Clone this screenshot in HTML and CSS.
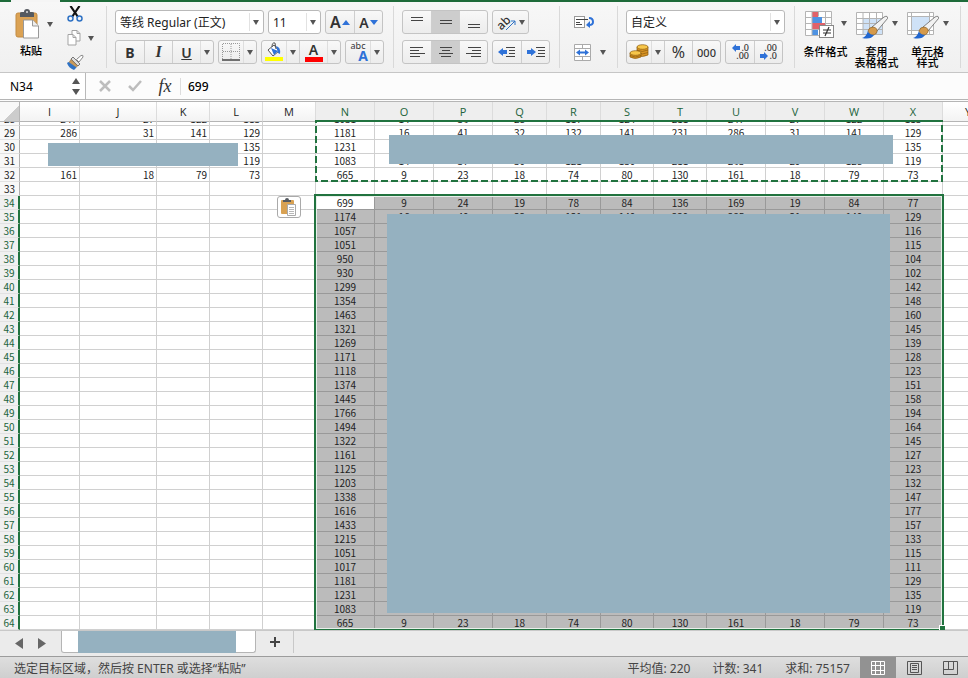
FILE: index.html
```html
<!DOCTYPE html>
<html lang="zh-CN">
<head>
    <meta charset="UTF-8">
    <meta name="viewport" content="width=device-width, initial-scale=1.0">
    <title>Sheet</title>
    <link rel="stylesheet" href="styles.css">
</head>
<body>
    <div class="ribbon-tabs"><span class="active-tab"></span></div>

    <header class="ribbon">
        <div class="group clipboard">
            <button type="button" class="big paste">
                <span class="big-icon">
                    <svg width="26" height="31" viewBox="0 0 26 31">
                        <rect x="1" y="4" width="21" height="24" rx="2" fill="#dba254" stroke="#c28b42"/>
                        <path d="M5 8V4q0-1 2-1h2q0-3 3-3t3 3h2q2 0 2 1v4z" fill="#555a60"/>
                        <circle cx="12" cy="3" r="1" fill="#ddd"/>
                        <path d="M8.500 11h9l6 6v12h-15z" fill="#fff" stroke="#999"/>
                        <path d="M17.500 11v6h6" fill="#eee" stroke="#999"/>
                    </svg>
                    <i class="caret"></i>
                </span>
                <span>粘贴</span>
            </button>
            <div class="small-icons">
                <button type="button" aria-label="剪切">
                    <svg width="16" height="16" viewBox="0 0 16 16" fill="none">
                        <path d="M3.500 0l7.500 11M12.500 0L5 11" stroke="#111" stroke-width="2.200"/>
                        <circle cx="3.500" cy="12.500" r="2.500" stroke="#2f72c4" stroke-width="1.500"/>
                        <circle cx="12.500" cy="12.500" r="2.500" stroke="#2f72c4" stroke-width="1.500"/>
                    </svg>
                </button>
                <button type="button" aria-label="复制">
                    <svg width="16" height="16" viewBox="0 0 16 16" fill="#fff" stroke="#a3a3a3">
                        <path d="M5 .5h5l3 3V11H5z"/>
                        <path d="M10 .5v3h3" fill="none"/>
                        <path d="M1 4.500h5l3 3V15H1z"/>
                        <path d="M6 4.500v3h3" fill="none"/>
                    </svg>
                    <i class="caret"></i>
                </button>
                <button type="button" aria-label="格式刷">
                    <svg width="18" height="16" viewBox="0 0 18 16">
                        <path d="M9.500 5.500L14 1.500q2.500-1 2 1.500L12 8z" fill="#fff" stroke="#888"/>
                        <path d="M6 3l7 7-2 2-7-7z" fill="#ddd" stroke="#777"/>
                        <path d="M4 5.500l6.500 6.500-1.500 1.500-7-5z" fill="#c89a5b" stroke="#8d6b3d" stroke-width=".6"/>
                        <path d="M1.500 8l8 5.500L7 16Q1.500 14 0 9z" fill="#2f72c4"/>
                    </svg>
                </button>
            </div>
        </div>

        <div class="group">
            <div class="line">
                <span class="combo font-name">
                    <select aria-label="字体"><option>等线 Regular (正文)</option></select>
                </span>
                <span class="combo font-size">
                    <select aria-label="字号"><option>11</option></select>
                </span>
                <div class="buttons">
                    <button type="button" class="letter" aria-label="增大字号">A<i class="tri up"></i></button>
                    <button type="button" class="letter small" aria-label="减小字号">A<i class="tri down"></i></button>
                </div>
            </div>
            <div class="line">
                <div class="buttons">
                    <button type="button" class="bold">B</button>
                    <button type="button" class="italic">I</button>
                    <button type="button" class="underline"><u>U</u></button>
                    <button type="button" class="drop" aria-label="下划线选项"><i class="caret"></i></button>
                </div>
                <div class="buttons">
                    <button type="button" class="narrow" aria-label="边框">
                        <svg width="18" height="18" viewBox="0 0 18 18" fill="none" stroke="#999">
                            <path d="M.5 16V.5h17V16M9 1v15M1 8.500h16" stroke-dasharray="1 1"/>
                            <path d="M0 17h18" stroke="#444" stroke-width="1.500"/>
                        </svg>
                    </button>
                    <button type="button" class="drop" aria-label="边框选项"><i class="caret"></i></button>
                </div>
                <div class="buttons">
                    <button type="button" class="fill" aria-label="填充颜色">
                        <svg width="18" height="20" viewBox="0 0 18 20">
                            <path d="M3 8l6-5 5 6-6 5z" fill="#fff" stroke="#555"/>
                            <path d="M6 6l7 3-4 4z" fill="#2f72d8"/>
                            <path d="M7 5q0-5 3-4l1 6" fill="none" stroke="#555"/>
                            <path d="M11 4q5 1 4 8l-2-1z" fill="#2f72d8"/>
                            <path d="M0 15h18v4H0z" fill="#ff0"/>
                        </svg>
                    </button>
                    <button type="button" class="drop" aria-label="填充颜色选项"><i class="caret"></i></button>
                    <button type="button" class="color">A</button>
                    <button type="button" class="drop" aria-label="字体颜色选项"><i class="caret"></i></button>
                </div>
                <div class="buttons">
                    <button type="button" class="phonetic"><span>abc</span><b>A</b></button>
                    <button type="button" class="drop" aria-label="拼音选项"><i class="caret"></i></button>
                </div>
            </div>
        </div>

        <div class="group">
            <div class="line">
                <div class="buttons">
                    <button type="button" aria-label="顶端对齐"><svg width="14" height="18" viewBox="0 0 14 18"><path d="M1 4.500h12M1 7.500h12" stroke="#444"/></svg></button>
                    <button type="button" class="pressed" aria-label="垂直居中"><svg width="14" height="18" viewBox="0 0 14 18"><path d="M1 7.500h12M1 10.500h12" stroke="#444"/></svg></button>
                    <button type="button" aria-label="底端对齐"><svg width="14" height="18" viewBox="0 0 14 18"><path d="M1 11.500h12M1 14.500h12" stroke="#444"/></svg></button>
                </div>
                <div class="buttons">
                    <button type="button" class="rotate" aria-label="方向">
                        <span>ab</span>
                        <svg width="11" height="11" viewBox="0 0 11 11"><path d="M1 10l9-9M6 1h4v4" fill="none" stroke="#2f72c4"/></svg>
                        <i class="caret"></i>
                    </button>
                </div>
            </div>
            <div class="line">
                <div class="buttons">
                    <button type="button" aria-label="左对齐"><svg width="16" height="12" viewBox="0 0 16 12"><path d="M1 1.500h13M1 4.500h9M1 7.500h15M1 10.500h10" stroke="#444"/></svg></button>
                    <button type="button" class="pressed" aria-label="居中"><svg width="16" height="12" viewBox="0 0 16 12"><path d="M2 1.500h12M4 4.500h8M1 7.500h14M3 10.500h10" stroke="#444"/></svg></button>
                    <button type="button" aria-label="右对齐"><svg width="16" height="12" viewBox="0 0 16 12"><path d="M2 1.500h13M6 4.500h9M0 7.500h15M5 10.500h10" stroke="#444"/></svg></button>
                </div>
                <div class="buttons">
                    <button type="button" aria-label="减少缩进"><svg width="18" height="12" viewBox="0 0 18 12"><path d="M0 6l5-4v2h4v4H5v2z" fill="#2f72d8"/><path d="M8 1.500h9M11 4.500h6M11 7.500h6M8 10.500h9" stroke="#444"/></svg></button>
                    <button type="button" aria-label="增加缩进"><svg width="18" height="12" viewBox="0 0 18 12"><path d="M9 6L4 2v2H0v4h4v2z" fill="#2f72d8"/><path d="M9 1.500h9M11 4.500h7M11 7.500h7M9 10.500h9" stroke="#444"/></svg></button>
                </div>
            </div>
        </div>

        <div class="group wrap-group">
            <button type="button" class="plain" aria-label="自动换行">
                <svg width="21" height="14" viewBox="0 0 21 14" fill="none">
                    <rect x=".5" y="1.500" width="10" height="11" fill="#fff" stroke="#999"/>
                    <path d="M2 4.500h12M2 9.500h6M2 7.500h4" stroke="#444"/>
                    <path d="M15 3q4 0 4 4 0 3-4 3" stroke="#2f72d8" stroke-width="2"/>
                    <path d="M16 6v7l-4-3z" fill="#2f72d8"/>
                </svg>
            </button>
            <button type="button" class="plain" aria-label="合并单元格">
                <svg width="17" height="17" viewBox="0 0 17 17">
                    <path d="M.5.500h16v16H.5zM.5 4.500h16M.5 12.500h16M8.500.500v4M8.500 12.500v4" fill="#fff" stroke="#aaa"/>
                    <path d="M2 8.500l4-3v2h5v-2l4 3-4 3v-2H6v2z" fill="#2f72d8"/>
                </svg>
                <i class="caret"></i>
            </button>
        </div>

        <div class="group">
            <div class="line">
                <span class="combo number-format">
                    <select aria-label="数字格式"><option>自定义</option></select>
                </span>
            </div>
            <div class="line">
                <div class="buttons">
                    <button type="button" class="fill" aria-label="货币">
                        <svg width="20" height="16" viewBox="0 0 20 16" stroke="#8a5a10" stroke-width=".7" fill="#d99423">
                            <path d="M8 3v8q5 3 11 0V3z"/>
                            <path d="M8 6q5 3 11 0M8 8.500q5 3 11 0" fill="none"/>
                            <ellipse cx="13.500" cy="3" rx="5.500" ry="2.300" fill="#f7c64a"/>
                            <path d="M1 9v4q5 3 11 0V9z"/>
                            <path d="M1 11.500q5 3 11 0" fill="none"/>
                            <ellipse cx="6.500" cy="9" rx="5.500" ry="2.300" fill="#f7c64a"/>
                        </svg>
                    </button>
                    <button type="button" class="drop" aria-label="货币选项"><i class="caret"></i></button>
                    <button type="button" class="percent">%</button>
                    <button type="button" class="thousands">000</button>
                </div>
                <div class="buttons">
                    <button type="button" class="decimals"><span><svg width="9" height="8" viewBox="0 0 9 8"><path d="M0 4l4-4v2h4v4H4v2z" fill="#2f72d8"/></svg>.0</span><span>.00</span></button>
                    <button type="button" class="decimals"><span>.00</span><span><svg width="9" height="8" viewBox="0 0 9 8"><path d="M8 4L4 0v2H0v4h4v2z" fill="#2f72d8"/></svg>.0</span></button>
                </div>
            </div>
        </div>

        <div class="group styles">
            <button type="button" class="big">
                <span class="big-icon">
                    <svg width="32" height="29" viewBox="0 0 32 29">
                        <rect x=".5" y=".5" width="26" height="24" fill="#fff"/>
                        <path d="M7 1h6v5H7z" fill="#e0626a"/><path d="M7 6h10v6H7z" fill="#4e92e2"/>
                        <path d="M7 12h13v6H7z" fill="#e0626a"/><path d="M7 18h6v6H7z" fill="#4e92e2"/>
                        <path d="M.5.500h26v24H.5zM.5 6.500h6M17 6.500h9M.5 12.500h6M20 12.500h6M.5 18.500h26M7 .5v24M13.500.5v5M20.500.5v24" fill="none" stroke="#b4b4b4"/>
                        <rect x="14.500" y="14.500" width="14" height="12" fill="#fff" stroke="#888"/>
                        <path d="M18 19h8M18 22h8M24 16l-4 9" stroke="#333" stroke-width="1.200"/>
                    </svg>
                    <i class="caret"></i>
                </span>
                <span>条件格式</span>
            </button>
            <button type="button" class="big">
                <span class="big-icon">
                    <svg width="32" height="29" viewBox="0 0 32 29">
                        <rect x=".5" y="1.500" width="26" height="22" fill="#fff"/>
                        <path d="M7 7h19v16H7z" fill="#cfe2f7"/>
                        <path d="M.5 1.500h26v22H.5zM.5 7.500h26M.5 12.500h26M.5 18.500h26M7 1.500v22M13.500 1.500v22M20.500 1.500v22" fill="none" stroke="#b4b4b4"/>
                        <path d="M16 16L28 6q4-2 3.500 1.500L21 20z" fill="#f2f2f2" stroke="#666" stroke-width=".8"/>
                        <path d="M12 20q1-4 5-4 5 1 4 5-2 4-7 3z" fill="#d59a4b" stroke="#87602a" stroke-width=".7"/>
                        <path d="M12 20q0 3 6 4-3 5-12 3 4-1 6-7z" fill="#2166cf"/>
                    </svg>
                    <i class="caret"></i>
                </span>
                <span>套用<br>表格格式</span>
            </button>
            <button type="button" class="big">
                <span class="big-icon">
                    <svg width="32" height="29" viewBox="0 0 32 29">
                        <path d="M.5 1.500h26v22H.5z" fill="#fff"/>
                        <path d="M4 6h19v13H4z" fill="#cfe2f7"/>
                        <path d="M.5 1.500h26v22H.5zM.5 5.500h26M.5 19.500h26M4.500 1.500v22M22.500 1.500v22" fill="none" stroke="#b4b4b4"/>
                        <path d="M16 16L28 6q4-2 3.500 1.500L21 20z" fill="#f2f2f2" stroke="#666" stroke-width=".8"/>
                        <path d="M12 20q1-4 5-4 5 1 4 5-2 4-7 3z" fill="#d59a4b" stroke="#87602a" stroke-width=".7"/>
                        <path d="M12 20q0 3 6 4-3 5-12 3 4-1 6-7z" fill="#2166cf"/>
                    </svg>
                    <i class="caret"></i>
                </span>
                <span>单元格<br>样式</span>
            </button>
        </div>
    </header>

    <div class="formula-bar">
        <div class="name-box">
            <input type="text" value="N34" aria-label="名称框">
            <span class="stepper"><i class="caret flip"></i><i class="caret"></i></span>
        </div>
        <button type="button" aria-label="取消"><svg width="12" height="12" viewBox="0 0 12 12"><path d="M1 1l10 10M11 1L1 11" stroke="#bdbdbd" stroke-width="2.500"/></svg></button>
        <button type="button" aria-label="输入"><svg width="14" height="12" viewBox="0 0 14 12"><path d="M1 6l4 4 8-9" fill="none" stroke="#bdbdbd" stroke-width="2.500"/></svg></button>
        <button type="button" class="fx">fx</button>
        <input type="text" class="formula" value="699" aria-label="编辑栏">
    </div>

    <main class="sheet">
        <table class="grid">
            <colgroup class="columns"></colgroup>
            <thead><tr id="columnNames"></tr></thead>
        </table>
        <div class="rows">
            <table class="grid">
                <colgroup class="columns"></colgroup>
                <tbody id="cells"></tbody>
            </table>
        </div>
        <div class="copied">
            <svg width="100%" height="100%"><rect x="1" y="-1" width="100%" height="100%"/></svg>
        </div>
        <div class="selection"></div>
        <div class="mask mask-left"></div>
        <div class="mask mask-top"></div>
        <div class="mask mask-main"></div>
        <button type="button" class="paste-options" aria-label="粘贴选项">
            <svg width="16" height="18" viewBox="0 0 16 18">
                <rect x="0" y="2" width="13" height="14" rx="1" fill="#d9a253"/>
                <path d="M2 4V2h2q0-2 2-2t2 2h2v2z" fill="#555a60"/>
                <path d="M6.500 6.500h8v11h-8z" fill="#fff" stroke="#aaa"/>
                <path d="M8 9.500h5M8 11.500h5M8 13.500h5M8 15.500h5" stroke="#999" stroke-width=".7"/>
            </svg>
        </button>
    </main>

    <nav class="sheet-tabs">
        <button type="button" aria-label="上一张"><svg width="8" height="11" viewBox="0 0 8 11"><path d="M8 0v11L0 5.500z" fill="#666"/></svg></button>
        <button type="button" aria-label="下一张"><svg width="8" height="11" viewBox="0 0 8 11"><path d="M0 0v11l8-5.500z" fill="#666"/></svg></button>
        <button type="button" class="tab" aria-label="工作表"><span></span></button>
        <button type="button" class="add" aria-label="新建工作表"><svg width="10" height="10" viewBox="0 0 10 10"><path d="M5 0v10M0 5h10" stroke="#444" stroke-width="2"/></svg></button>
    </nav>

    <footer class="status">
        <span class="message">选定目标区域，然后按 ENTER 或选择“粘贴”</span>
        <span>平均值: 220</span>
        <span>计数: 341</span>
        <span>求和: 75157</span>
        <div class="views">
            <button type="button" class="current" aria-label="普通"><svg width="14" height="14" viewBox="0 0 14 14"><path d="M.5.500h13v13H.5zM.5 4.500h13M.5 9.500h13M4.500.500v13M9.500.500v13" fill="none" stroke="#fff"/></svg></button>
            <button type="button" aria-label="页面布局"><svg width="15" height="14" viewBox="0 0 15 14" fill="none" stroke="#555"><path d="M.5.500h14v13H.5zM3.500 2.500h8v9h-8zM5 4.500h5M5 6.500h5M5 8.500h5"/></svg></button>
            <button type="button" aria-label="分页预览"><svg width="15" height="14" viewBox="0 0 15 14" fill="none" stroke="#555"><path d="M.5.500h14v13H.5zM5.500.500v8M10.500.500v8M.5 8.500h10"/></svg></button>
        </div>
    </footer>

    <script src="script.js"></script>
</body>
</html>
```
FILE: styles.css
```css
* {
    box-sizing: border-box;
}
body {
    display: flex;
    flex-direction: column;
    min-height: 100vh;
    margin: 0;
    background: #ebebeb;
    color: #222;
    font-family: "Noto Sans", "Noto Sans CJK SC", sans-serif;
    font-size: 12px;
}
button, input, select {
    margin: 0;
    padding: 0;
    border: 0;
    background: none;
    color: inherit;
    font: inherit;
}
button {
    display: flex;
    align-items: center;
    justify-content: center;
}
svg {
    display: block;
    flex: none;
}
.caret {
    flex: none;
    border: 3px solid transparent;
    border-top: 5px solid #555;
    border-bottom: 0;
}
.caret.flip {
    transform: rotate(180deg);
}

/* ribbon */
.ribbon-tabs {
    height: 2px;
    padding-left: 11px;
    background: #1e6b3a;
}
.active-tab {
    display: block;
    width: 49px;
    height: 2px;
    background: #f5f5f5;
}
.ribbon {
    display: flex;
    height: 71px;
    padding-top: 4px;
    border-bottom: 1px solid #c6c6c6;
    background: linear-gradient(#f7f7f7, #f0f0f0);
    overflow: hidden;
}
.group {
    display: flex;
    flex: none;
    flex-direction: column;
    gap: 6px;
    height: 62px;
    padding: 4px 9px 0 8px;
    border-right: 1px solid #d9d9d9;
}
.line {
    display: flex;
    gap: 4px;
}
.clipboard {
    flex-direction: row;
    gap: 8px;
    width: 107px;
    padding: 0 0 0 15px;
}
.big {
    flex-direction: column;
    justify-content: flex-start;
    width: 51px;
    color: #000;
    font-size: 11px;
    font-weight: 500;
    line-height: 11px;
}
.big-icon {
    display: flex;
    align-items: center;
    gap: 4px;
    height: 34px;
    margin-bottom: 1px;
}
.styles .big-icon {
    align-items: flex-start;
}
.styles .caret {
    margin-top: 10px;
}
.paste {
    align-items: flex-start;
    width: 44px;
    padding-top: 1px;
}
.paste .big-icon {
    gap: 6px;
    margin-bottom: 4px;
}
.paste > span:last-child {
    padding-left: 5px;
}
.small-icons {
    display: flex;
    flex-direction: column;
    gap: 8px;
}
.small-icons button {
    gap: 5px;
    justify-content: flex-start;
}
.combo {
    position: relative;
    display: block;
    height: 24px;
    border: 1px solid #b9b9b9;
    border-radius: 3px;
    background: #fff;
}
.combo select {
    width: 100%;
    height: 22px;
    padding-left: 4px;
    appearance: none;
}
.combo::before {
    content: "";
    position: absolute;
    top: 2px;
    right: 13px;
    height: 18px;
    border-left: 1px solid #e2e2e2;
}
.combo::after {
    content: "";
    position: absolute;
    top: 9px;
    right: 4px;
    border: 3px solid transparent;
    border-top: 5px solid #555;
    border-bottom: 0;
    pointer-events: none;
}
.font-name {
    width: 149px;
}
.font-size {
    width: 53px;
}
.number-format {
    width: 159px;
}
.buttons {
    display: flex;
    height: 24px;
    border: 1px solid #c4c4c4;
    border-radius: 3px;
    background: linear-gradient(#f8f8f8, #ececec);
    overflow: hidden;
}
.buttons button {
    width: 28px;
    border-left: 1px solid #cecece;
    color: #333;
}
.buttons button:first-child {
    border-left: 0;
}
.buttons .pressed {
    background: #cdcdcd;
}
.buttons .drop {
    width: 13px;
    border-left-color: #dedede;
}
.buttons .narrow, .buttons .fill, .buttons .phonetic {
    width: 24px;
}
.letter {
    gap: 1px;
    font-size: 16px;
    font-weight: 600;
}
.letter.small {
    font-size: 14px;
}
.tri {
    border: 4px solid transparent;
}
.tri.up {
    border-top: 0;
    border-bottom: 5px solid #2f72d8;
}
.tri.down {
    border-bottom: 0;
    border-top: 5px solid #2f72d8;
}
.bold, .italic, .underline {
    font-size: 14px;
    font-weight: bold;
}
.italic {
    font-family: "Liberation Serif", serif;
    font-style: italic;
    font-size: 16px;
}
.underline {
    font-weight: 600;
}
.color {
    flex-direction: column;
    font-size: 14px;
    font-weight: 600;
    line-height: 14px;
}
.color::after {
    content: "";
    width: 18px;
    height: 5px;
    background: #f00;
}
.phonetic {
    flex-direction: column;
}
.phonetic span {
    font-size: 9px;
    line-height: 8px;
}
.phonetic b {
    padding-left: 10px;
    color: #2f72d8;
    font-size: 14px;
    line-height: 12px;
}
.buttons .rotate {
    width: 35px;
}
.rotate span {
    font-size: 12px;
    font-weight: 500;
    transform: rotate(-45deg);
}
.rotate svg {
    margin: 6px 3px 0 -6px;
}
.wrap-group {
    width: 58px;
    padding-left: 14px;
}
.plain {
    gap: 9px;
    height: 24px;
    justify-content: flex-start;
}
.percent {
    font-size: 16px;
}
.thousands {
    font-size: 11px;
    font-weight: 500;
}
.decimals {
    flex-direction: column;
    align-items: flex-end;
    padding-right: 5px;
    font-size: 9px;
    font-weight: 500;
    line-height: 8px;
}
.decimals span {
    display: flex;
    align-items: center;
}
.styles {
    flex-direction: row;
    gap: 0;
    width: 166px;
    padding: 5px 0 0 5px;
}

/* formula bar */
.formula-bar {
    display: flex;
    align-items: center;
    height: 29px;
    border-bottom: 3px double #b5b5b5;
    background: #fcfcfc;
    color: #000;
}
.name-box {
    display: flex;
    align-items: center;
    align-self: stretch;
    width: 86px;
    padding: 0 5px 0 10px;
    border-right: 1px solid #b9b9b9;
    background: #fff;
}
.name-box input {
    flex: 1;
    min-width: 0;
}
.stepper {
    display: flex;
    flex-direction: column;
    gap: 5px;
}
.stepper .caret {
    border-width: 6px 4px 0;
}
.formula-bar button {
    width: 30px;
    margin-left: 4px;
}
.formula-bar button + button {
    margin-left: 0;
}
.formula-bar .fx {
    color: #333;
    font-family: "Liberation Serif", serif;
    font-size: 18px;
    font-style: italic;
}
.formula-bar .formula {
    flex: 1;
    padding-left: 7px;
    border-left: 1px solid #ddd;
    font-weight: 500;
}

/* grid */
.sheet {
    position: relative;
    flex: 1;
    background: #fff;
    overflow: hidden;
}
.grid {
    width: 100%;
    border-spacing: 0;
    table-layout: fixed;
}
.grid th, .grid td {
    overflow: hidden;
    padding: 0;
    white-space: nowrap;
}
.grid thead th {
    height: 20px;
    border-right: 1px solid #dcdcdc;
    border-bottom: 1px solid #b5b5b5;
    background: linear-gradient(#fff, #f3f3f3);
    font-family: "Open Sans", sans-serif;
    font-size: 11px;
    font-weight: normal;
    line-height: 18px;
}
.grid thead .picked {
    background: #eee;
    color: #21633b;
}
.grid thead .corner {
    border-right-color: #b5b5b5;
    background: linear-gradient(135deg, #f8f8f8 60%, #ccc 60%);
}
.rows {
    overflow: hidden;
}
/* first row is scrolled partly out of view */
.rows .grid {
    margin-top: -10px;
}
.rows th, .rows td {
    height: 14px;
    border-right: 1px solid #d0d0d0;
    border-bottom: 1px solid #d0d0d0;
    font-family: "Noto Sans CJK SC", sans-serif;
    font-size: 10px;
    font-weight: normal;
    line-height: 13px;
    text-align: center;
}
.rows th {
    border-right: 1px solid #b0b0b0;
    border-bottom-color: #e2e2e2;
    background: #f8f8f8;
}
.rows th.picked {
    border-right: 2px solid #21733f;
    background: #f0f0f0;
    color: #21633b;
}
.rows td.right {
    padding-right: 2px;
    text-align: right;
}
.rows td.picked {
    border-color: #999;
    background: #bbb;
}
.rows td.active {
    background: #fff;
}
.copied {
    position: absolute;
    top: 18px;
    left: 315px;
    width: 628px;
    height: 64px;
    padding: 0 2px 2px 0;
    border-top: 2px solid #21733f;
}
.copied svg {
    overflow: visible;
}
.copied rect {
    fill: none;
    stroke: #21733f;
    stroke-width: 2px;
    stroke-dasharray: 7 3;
}
.selection {
    position: absolute;
    top: 92px;
    left: 314px;
    width: 630px;
    height: 436px;
    border: 2px solid #21733f;
    border-bottom-width: 1px;
    box-shadow: inset 0 0 0 1px #e8f0ea;
}
.selection::after {
    content: "";
    position: absolute;
    right: -3px;
    bottom: -2px;
    width: 5px;
    height: 5px;
    border: 1px solid #fff;
    border-width: 1px 0 0 1px;
    background: #21733f;
}
.mask {
    position: absolute;
    background: #95b1c0;
}
.mask-left {
    top: 41px;
    left: 48px;
    width: 190px;
    height: 23px;
}
.mask-top {
    top: 33px;
    left: 389px;
    width: 504px;
    height: 29px;
}
.mask-main {
    top: 112px;
    left: 387px;
    width: 503px;
    height: 399px;
}
.paste-options {
    position: absolute;
    top: 94px;
    left: 277px;
    width: 24px;
    height: 22px;
    border: 1px solid #aaa;
    border-radius: 3px;
    background: #fff;
}

/* sheet tabs */
.sheet-tabs {
    display: flex;
    align-items: center;
    gap: 15px;
    height: 26px;
    padding-left: 15px;
    border-top: 1px solid #c8c8c8;
}
.tab {
    align-self: flex-start;
    width: 195px;
    height: 22px;
    padding-right: 4px;
    border: 1px solid #b5b5b5;
    border-top: 0;
    border-radius: 0 0 3px 3px;
    background: #fff;
}
.tab span {
    width: 158px;
    height: 22px;
    background: #95b1c0;
}
.add {
    align-self: flex-start;
    width: 31px;
    height: 22px;
    margin-left: -8px;
    padding-right: 6px;
    border-right: 1px solid #c8c8c8;
}

/* status bar */
.status {
    display: flex;
    align-items: center;
    gap: 22px;
    height: 22px;
    padding-left: 14px;
    border-top: 1px solid #9c9c9c;
    background: linear-gradient(#dedede, #cfcfcf);
    color: #444;
}
.message {
    flex: 1;
}
.views {
    display: flex;
    align-self: stretch;
    margin-left: -12px;
}
.views button {
    width: 36px;
}
.views .current {
    background: #929292;
}
```
FILE: script.js
```js
const widths = [20, 60, 77, 53, 53, 53, 59, 59, 59, 54, 54, 53, 53, 59, 59, 59, 59, 51];
const names = 'IJKLMNOPQRSTUVWXY'.split('');

// values for columns I-L, then N-X
const left = {
    28: [247, 27, 122, 113],
    29: [286, 31, 141, 129],
    30: [298, 32, 147, 135],
    31: [263, 29, 128, 119],
    32: [161, 18, 79, 73]
};
const right = {
    28: [1031, 14, 36, 28, 117, 124, 211, 247, 27, 122, 113],
    29: [1181, 16, 41, 32, 132, 141, 231, 286, 31, 141, 129],
    30: [1231, '', '', '', '', '', '', '', '', '', 135],
    31: [1083, 14, 37, 30, 121, 130, 211, 263, 29, 128, 119],
    32: [665, 9, 23, 18, 74, 80, 130, 161, 18, 79, 73],
    34: [699, 9, 24, 19, 78, 84, 136, 169, 19, 84, 77],
    35: [1174, 16, 40, 32, 131, 140, 229, 285, 31, 140, 129],
    63: [1083, 14, 37, 30, 121, 130, 211, 263, 29, 128, 119],
    64: [665, 9, 23, 18, 74, 80, 130, 161, 18, 79, 73]
};
// first and last column of rows 36-62
const totals = [
    [1057, 116], [1051, 115], [950, 104], [930, 102], [1299, 142], [1354, 148],
    [1463, 160], [1321, 145], [1269, 139], [1171, 128], [1118, 123], [1374, 151],
    [1445, 158], [1766, 194], [1494, 164], [1322, 145], [1161, 127], [1125, 123],
    [1203, 132], [1338, 147], [1616, 177], [1433, 157], [1215, 133], [1051, 115],
    [1017, 111], [1181, 129], [1231, 135]
];
totals.forEach((pair, i) => {
    right[36 + i] = [pair[0], '', '', '', '', '', '', '', '', '', pair[1]];
});

// the last column takes whatever width is left
document.querySelectorAll('.columns').forEach(group => {
    group.innerHTML = widths.map(w => `<col style="width: ${w}px">`).join('') + '<col>';
});

document.getElementById('columnNames').innerHTML = '<th class="corner"></th>' +
    names.map((name, i) => `<th class="${i >= 5 && i <= 15 ? 'picked' : ''}">${name}</th>`).join('') +
    '<th></th>';

let html = '';
for (let row = 28; row <= 64; row++) {
    const picked = row >= 34;
    html += `<tr><th class="${picked ? 'picked' : ''}">${row}</th>`;
    for (let col = 0; col <= names.length; col++) {
        let value = '';
        let cls = '';
        if (col < 4) {
            value = left[row] ? left[row][col] : '';
            cls = 'right';
        } else if (col >= 5 && col <= 15) {
            value = right[row] ? right[row][col - 5] : '';
            if (picked) cls = row === 34 && col === 5 ? 'picked active' : 'picked';
        }
        html += `<td class="${cls}">${value}</td>`;
    }
    html += '</tr>';
}
document.getElementById('cells').innerHTML = html;
```
